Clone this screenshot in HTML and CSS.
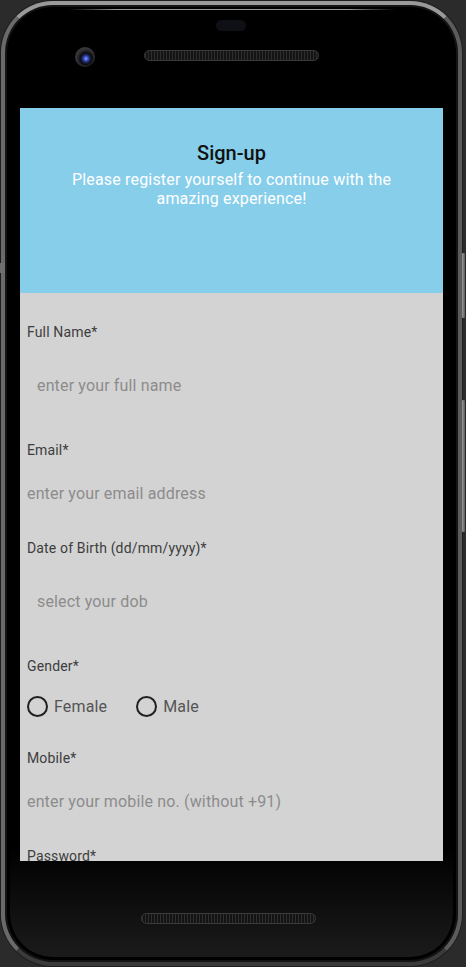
FILE: index.html
```html
<!DOCTYPE html>
<html lang="en">
<head>
<meta charset="utf-8">
<title>Sign-up</title>
<link rel="stylesheet" href="styles.css">
</head>
<body>
<div class="device">
  <div class="phone">
    <div class="top-bezel">
      <span class="sensor"></span>
      <span class="camera"></span>
      <span class="speaker"></span>
    </div>
    <div class="screen">
      <header class="header">
        <h1 class="title">Sign-up</h1>
        <p class="subtitle">Please register yourself to continue with the amazing experience!</p>
      </header>
      <form class="form">
        <div class="field">
          <label class="label">Full Name*</label>
          <div class="input padded">enter your full name</div>
        </div>
        <div class="field">
          <label class="label">Email*</label>
          <div class="input">enter your email address</div>
        </div>
        <div class="field">
          <label class="label">Date of Birth (dd/mm/yyyy)*</label>
          <div class="input padded">select your dob</div>
        </div>
        <div class="field gender">
          <label class="label">Gender*</label>
          <div class="radios">
            <span class="radio"><span class="circle"></span>Female</span>
            <span class="radio"><span class="circle"></span>Male</span>
          </div>
        </div>
        <div class="field">
          <label class="label">Mobile*</label>
          <div class="input">enter your mobile no. (without +91)</div>
        </div>
        <div class="field">
          <label class="label">Password*</label>
        </div>
      </form>
    </div>
    <div class="bottom-bezel">
      <span class="speaker bottom"></span>
    </div>
  </div>
  <span class="side-btn btn-power"></span>
  <span class="side-btn btn-volume"></span>
  <span class="side-btn-left"></span>
</div>
</body>
</html>
```
FILE: styles.css
```css
* { box-sizing: border-box; }
html, body {
  margin: 0;
  padding: 0;
  background: #2b2b2b;
  width: 466px;
  height: 967px;
  overflow: hidden;
  font-family: Roboto, "Noto Sans", sans-serif;
}
.device {
  position: relative;
  width: 466px;
  height: 967px;
  padding: 1px 0 0 1px;
}
.phone {
  position: relative;
  width: 461px;
  height: 965px;
  border: 4px solid #4d4d4d;
  border-top-color: #9a9a9a;
  border-left-color: #6a6a6a;
  border-right-color: #5c5c5c;
  border-bottom-color: #3a3a3a;
  border-radius: 52px;
  background: linear-gradient(#000 0%, #000 88%, #1c1c1c 100%);
  box-shadow: inset 0 0 0 2px #141414, inset 0 0 0 5px #000, 0 0 0 1px #1e1e1e;
  display: flex;
  flex-direction: column;
  padding: 0 14px 0 15px;
}
.top-bezel {
  position: relative;
  height: 103px;
  flex: none;
}
.top-bezel::before {
  content: "";
  position: absolute;
  left: 48px;
  right: 48px;
  top: 4px;
  height: 1px;
  background: linear-gradient(90deg, transparent, #9a9a9a 15%, #9a9a9a 85%, transparent);
}
.sensor {
  position: absolute;
  left: 196px;
  top: 15px;
  width: 30px;
  height: 11px;
  border-radius: 6px;
  background: #0e1016;
}
.camera {
  position: absolute;
  left: 55px;
  top: 42px;
  width: 20px;
  height: 20px;
  border-radius: 50%;
  background: radial-gradient(circle at 55% 58%, #8da0ff 0, #3a55cc 2px, #1a2250 4px, #0a0a0e 6px, #1e1e22 7px, #36363a 10px);
}
.speaker {
  position: absolute;
  left: 124px;
  top: 45px;
  width: 175px;
  height: 11px;
  border-radius: 6px;
  border: 1px solid #3a3a3a;
  background:
    repeating-linear-gradient(90deg, #2e2e2e 0 1px, #141414 1px 3px),
    #1a1a1a;
}
.speaker.bottom {
  left: 121px;
  top: 52px;
}
.screen {
  width: 423px;
  height: 753px;
  flex: none;
  background: #d3d3d3;
  overflow: hidden;
}
.bottom-bezel {
  position: relative;
  flex: 1;
}
.header {
  height: 185px;
  background: #87ceeb;
  padding-top: 33px;
  text-align: center;
}
.title {
  margin: 0;
  font-size: 20px;
  line-height: 24px;
  font-weight: 500;
  color: #111;
}
.subtitle {
  margin: 5px 0 0;
  padding: 0 40px;
  font-size: 16px;
  line-height: 19px;
  letter-spacing: 0.18px;
  color: #fff;
}
.form {
  display: flex;
  flex-direction: column;
  gap: 37px;
  padding: 31px 0 0 7px;
}
.field {
  display: flex;
  flex-direction: column;
  gap: 26px;
}
.field.gender {
  gap: 22px;
  margin-bottom: -3px;
}
.label {
  font-size: 14px;
  line-height: 16px;
  letter-spacing: 0.15px;
  color: #3d3d3d;
}
.input {
  font-size: 16px;
  line-height: 19px;
  letter-spacing: 0.15px;
  color: #8c8c8c;
}
.input.padded {
  padding: 10px 10px;
}
.radios {
  display: flex;
  gap: 29px;
  height: 20px;
}
.radio {
  display: flex;
  align-items: center;
  gap: 6px;
  font-size: 16px;
  line-height: 19px;
  letter-spacing: 0.15px;
  color: #555;
}
.circle {
  width: 21px;
  height: 21px;
  border: 2px solid #1f1f1f;
  border-radius: 50%;
  flex: none;
}
.side-btn {
  position: absolute;
  left: 462px;
  width: 3px;
  background: linear-gradient(90deg, #9a9a9a, #5a5a5a);
  border-radius: 1px;
}
.btn-power { top: 253px; height: 65px; }
.btn-volume { top: 400px; height: 132px; }
.side-btn-left {
  position: absolute;
  left: 0;
  top: 263px;
  width: 5px;
  height: 10px;
  background: #6e6e6e;
}
```
